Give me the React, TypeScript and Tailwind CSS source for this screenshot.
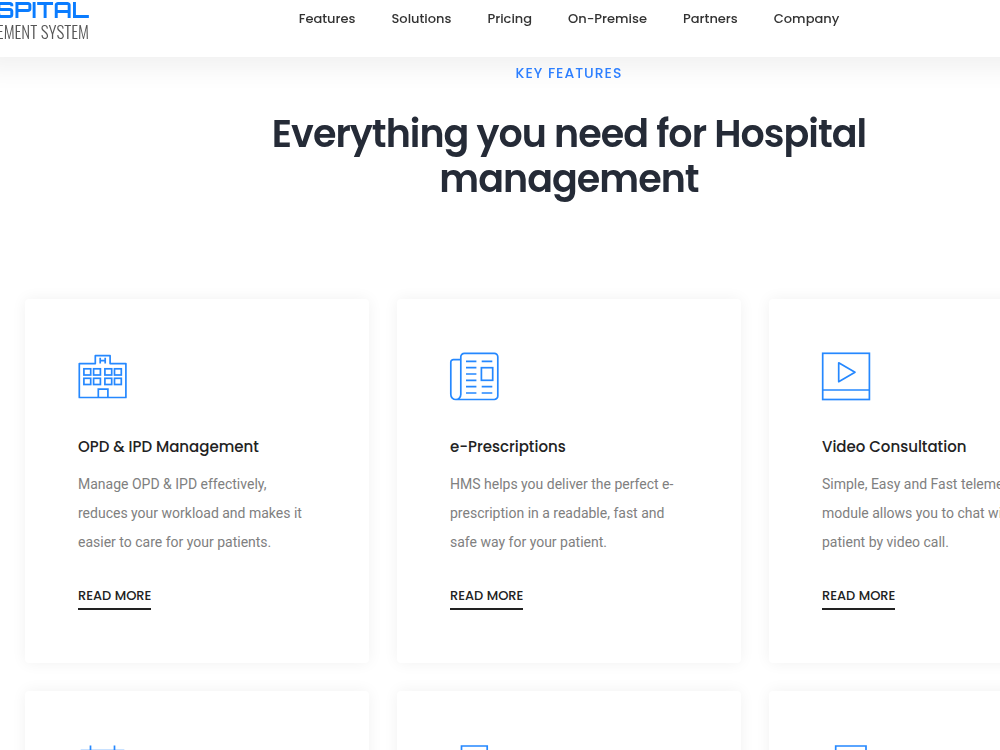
import type { ReactNode } from "react";

const navItems = ["Features", "Solutions", "Pricing", "On-Premise", "Partners", "Company"];

function Icon({ children }: { children: ReactNode }) {
  return (
    <svg
      aria-hidden="true"
      viewBox="0 0 48 48"
      className="block size-12 overflow-visible"
      fill="none"
      stroke="#2588ff"
      strokeWidth="1.7"
    >
      {children}
    </svg>
  );
}

const HospitalIcon = () => (
  <Icon>
    <path d="M1.3 11.6H17.3V3.7H32.1V11.6H47.9V45.5H1.3Z" strokeLinejoin="round" />
    <path d="M22.2 5.8v5.6M27.2 5.8v5.6M22.2 8.6h5" />
    {[5.9, 15.6, 26.9, 36.5].map((x) =>
      [16.8, 26.3].map((y) => <rect key={`${x}-${y}`} x={x} y={y} width="6.8" height="6.2" />)
    )}
    <path d="M20.3 45.5V37.2H29.9V45.5" />
  </Icon>
);

const NewspaperIcon = () => (
  <Icon>
    <path d="M5.8 47.5H44.3a3.5 3.5 0 0 0 3.5-3.5V4.8a3.5 3.5 0 0 0-3.5-3.5H14.3a3.5 3.5 0 0 0-3.5 3.5V42.5a5 5 0 0 1-10 0V10.2a2.6 2.6 0 0 1 2.6-2.6h7.4M5.8 47.5a5 5 0 0 1-5-5" />
    <path d="M16 9.3h10.4M31.7 9.3h10.6M16 15.7h10.4M16 22h10.4M16 28.3h10.4M16 34.7h10.4M31.7 34.7h10.6M16 41h10.4M31.7 41h10.6" />
    <rect x="31.4" y="15.7" width="11.3" height="12.6" />
  </Icon>
);

const VideoIcon = () => (
  <Icon>
    <rect x=".7" y="1.3" width="46.7" height="46.2" />
    <path d="M.7 38H47.4" />
    <path d="M16.7 10.8V29.7L33 20.2Z" strokeLinejoin="round" />
  </Icon>
);

const CalendarIcon = () => (
  <Icon>
    <path d="M12.5 1.4V11M36.5 1.4V11" />
    <path d="M3.5 6.6H45.5V46.6H3.5ZM3.5 16H45.5" />
  </Icon>
);

const ClipboardIcon = () => (
  <Icon>
    <path d="M11.5 46.6V2H37.2V46.6Z" />
    <path d="M17 12H31M17 20H31M17 28H31" />
  </Icon>
);

const DocumentIcon = () => (
  <Icon>
    <path d="M13.7 46.6V2H44V46.6Z" />
    <path d="M20 12H38M20 20H38M20 28H38" />
  </Icon>
);

const features = [
  {
    icon: <HospitalIcon />,
    title: "OPD & IPD Management",
    text: "Manage OPD & IPD effectively, reduces your workload and makes it easier to care for your patients.",
  },
  {
    icon: <NewspaperIcon />,
    title: "e-Prescriptions",
    text: "HMS helps you deliver the perfect e-prescription in a readable, fast and safe way for your patient.",
  },
  {
    icon: <VideoIcon />,
    title: "Video Consultation",
    text: "Simple, Easy and Fast telemedicine module allows you to chat with patient by video call.",
  },
];

const moreIcons = [<CalendarIcon />, <ClipboardIcon />, <DocumentIcon />];

const cardClass = "rounded bg-white p-[53px] shadow-[0_0_15px_rgba(0,0,0,0.06)]";

function Header() {
  return (
    <header className="sticky top-0 z-10 grid h-[57px] grid-cols-[1fr_auto_1fr] items-start bg-white shadow-[0_-8px_25px_20px_rgba(0,0,0,0.06)]">
      <a
        href="#home"
        className="flex w-[89px] flex-col items-end overflow-hidden whitespace-nowrap"
      >
        <span className="font-['Orbitron','DejaVu_Sans',sans-serif] text-[22px] leading-5 font-bold text-[#0a7cff]">
          HOSPITAL
        </span>
        <span className="font-['Oswald','Liberation_Sans_Narrow',sans-serif] text-[17px] leading-[23px] font-light text-[#555]">
          MANAGEMENT SYSTEM
        </span>
      </a>
      <nav className="flex gap-9 pt-[9px]">
        {navItems.map((item) => (
          <a
            key={item}
            href={`#${item.toLowerCase()}`}
            className="text-[13px] leading-5 font-medium text-[#333]"
          >
            {item}
          </a>
        ))}
      </nav>
    </header>
  );
}

export default function App() {
  return (
    <div className="h-screen overflow-hidden bg-white font-['Poppins','Inter',sans-serif]">
      <div className="min-w-[1138px]">
        <Header />
        <main className="px-[25px]">
          <div className="relative z-20 pt-1.5 text-center">
            <p className="text-[14px] leading-5 font-medium tracking-[1px] text-[#2d7fff]">
              KEY FEATURES
            </p>
            <h1 className="mx-auto mt-7 max-w-[660px] text-[38px] leading-[45px] font-semibold tracking-tight text-[#252b37]">
              Everything you need for Hospital management
            </h1>
          </div>
          <div className="mt-[98px] grid grid-cols-3 gap-7">
            {features.map((f) => (
              <article key={f.title} className={cardClass}>
                {f.icon}
                <h2 className="mt-[35px] text-[15px] leading-6 font-medium text-[#222]">
                  {f.title}
                </h2>
                <p className="mt-[11px] font-['Roboto',sans-serif] text-[14px] leading-[29px] text-[#808080]">
                  {f.text}
                </p>
                <a
                  href="#more"
                  className="mt-[29px] inline-block border-b-2 border-[#222] pb-0.5 text-[13px] leading-5 font-medium text-[#222]"
                >
                  READ MORE
                </a>
              </article>
            ))}
            {moreIcons.map((icon, i) => (
              <article key={i} className={cardClass}>
                {icon}
              </article>
            ))}
          </div>
        </main>
      </div>
    </div>
  );
}
